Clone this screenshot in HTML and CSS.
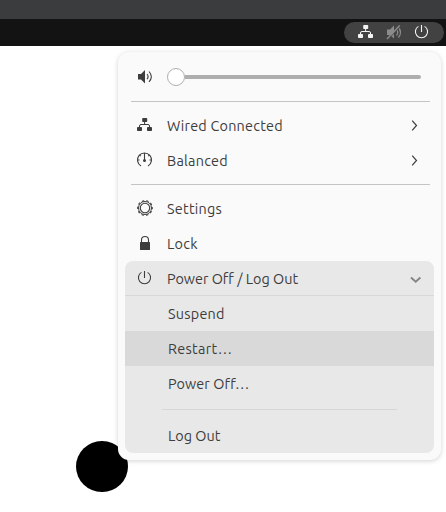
FILE: index.html
```
<!DOCTYPE html>
<html lang="en">
<head>
<meta charset="utf-8">
<title>System menu</title>
<link rel="stylesheet" href="styles.css">
</head>
<body>
<svg class="defs" width="0" height="0">
  <symbol id="network" viewBox="0 0 16 16">
    <g fill="currentColor"><rect x="5.2" y="0" width="5" height="4" rx=".8"/><rect x="0" y="9" width="5" height="4" rx=".8"/><rect x="10" y="9" width="5" height="4" rx=".8"/></g>
    <path d="M7.6 3v3.5M2.5 10V8q0-1.5 1.5-1.5h7q1.5 0 1.5 1.5v2" fill="none" stroke="currentColor"/>
  </symbol>
  <symbol id="power" viewBox="0 0 16 16">
    <path d="M7.5 0v7M4.4 1.4a6.1 6.1 0 1 0 6.2 0" fill="none" stroke="currentColor" stroke-width="1.1"/>
  </symbol>
  <symbol id="chevron" viewBox="0 0 16 16">
    <path d="M4.2 2.7l4.3 4.8-4.3 4.8" fill="none" stroke="currentColor" stroke-width="1.2"/>
  </symbol>
</svg>
<header class="window-bar"></header>
<div class="top-bar">
  <div class="tray">
    <svg class="icon"><use href="#network"/></svg>
    <svg class="icon muted" viewBox="0 0 16 16"><path d="M1 4.5h3l4-4v13l-4-3.5H1z" fill="currentColor"/><path d="M10.5 4.5q2.5 3 0 6M12.5 2.5q4 5 0 10" fill="none" stroke="currentColor" stroke-width="1.3"/><path d="M1.5 15L14.5 1.5" stroke="#424242" stroke-width="1"/><path d="M1 14L13.7.5" stroke="currentColor" stroke-width="1.5"/></svg>
    <svg class="icon"><use href="#power"/></svg>
  </div>
</div>
<main class="desktop"><div class="dot"></div></main>
<div class="menu">
  <div class="row volume">
    <svg class="icon" viewBox="0 0 16 16"><path d="M1 5h3L8 1v13.4L4 10.5H1z" fill="currentColor"/><path d="M10 5q2.2 2.6 0 5.2M12 2.5q4.6 5.2 0 10.4" fill="none" stroke="currentColor" stroke-width="1.1"/></svg>
    <div class="slider"><span class="knob"></span><span class="track"></span></div>
  </div>
  <hr class="line">
  <div class="row"><svg class="icon"><use href="#network"/></svg><span class="label wired">Wired Connected</span><svg class="icon arrow"><use href="#chevron"/></svg></div>
  <div class="row"><svg class="icon" viewBox="0 0 16 16"><path d="M4 13A7 7 0 1 1 11 13" fill="none" stroke="currentColor" stroke-width="1.1"/><path d="M7.5 0v7M.5 7h2M12.5 7h2M2.5 2l1.2 1.2M12.5 2l-1.2 1.2" stroke="currentColor" stroke-width="1.1"/><circle cx="7.5" cy="7.5" r="1.5" fill="currentColor"/></svg><span class="label balanced">Balanced</span><svg class="icon arrow"><use href="#chevron"/></svg></div>
  <hr class="line">
  <div class="row"><svg class="icon" viewBox="0 0 16 16"><g fill="none" stroke="currentColor"><circle cx="8" cy="7" r="7.3" stroke-width="1.1" stroke-dasharray="2.4 2.187" stroke-dashoffset="1.2"/><circle cx="8" cy="7" r="6.5" stroke-width="1"/><circle cx="8" cy="7" r="4.7" stroke-width="1.1"/></g></svg><span class="label settings">Settings</span></div>
  <div class="row"><svg class="icon" viewBox="0 0 16 16"><rect x="3" y="6" width="10" height="8" rx=".5" fill="currentColor"/><path d="M4.5 7V4a3.5 3.5 0 0 1 7 0V7" fill="none" stroke="currentColor" stroke-width="1.1"/></svg><span class="label lock">Lock</span></div>
  <section class="submenu">
    <div class="row head"><svg class="icon"><use href="#power"/></svg><span class="label session">Power Off / Log Out</span><svg class="icon arrow down" viewBox="0 0 16 16"><path d="M3 6.5l4.7 4.2 4.7-4.2" fill="none" stroke="currentColor" stroke-width="1.9"/></svg></div>
    <div class="item"><span class="suspend">Suspend</span></div>
    <div class="item active"><span class="restart">Restart…</span></div>
    <div class="item"><span class="poweroff">Power Off…</span></div>
    <hr class="subline">
    <div class="item"><span class="logout">Log Out</span></div>
  </section>
</div>
</body>
</html>
```
FILE: styles.css
```
* { box-sizing: border-box; }
body {
  margin: 0;
  height: 512px;
  overflow: hidden;
  display: flex;
  flex-direction: column;
  background: #fff;
  color: #3d3d3d;
  font: 14.4px/20px Ubuntu, "Noto Sans", sans-serif;
}
.defs { position: absolute; }
.window-bar { height: 19px; background: #3b3c3e; }
.top-bar {
  height: 27px;
  padding: 3px 2px 0 0;
  display: flex;
  justify-content: flex-end;
  background: #131313;
}
.tray {
  width: 100px;
  height: 21px;
  padding: 0 14px;
  display: flex;
  align-items: center;
  justify-content: space-between;
  border-radius: 11px;
  background: #424242;
  color: #f4f4f4;
}
.icon { width: 16px; height: 16px; flex: none; display: block; overflow: visible; }
.muted { color: #8b8b8b; }
.desktop { flex: 1; padding: 394.5px 0 0 76px; }
.dot { width: 52px; height: 51.5px; border-radius: 50%; background: #000; }
.menu {
  position: absolute;
  left: 118px;
  top: 52px;
  width: 323px;
  height: 408px;
  padding: 8px 7px 0;
  border-radius: 11px;
  background: #fafafa;
  box-shadow: 0 1px 5px rgba(0, 0, 0, .18);
}
.row {
  height: 35px;
  padding: 0 10px 0 12px;
  display: flex;
  align-items: center;
}
.volume { height: 34px; margin-bottom: 7px; }
.label { margin-left: 14px; white-space: nowrap; }
.arrow { margin-left: auto; }
.wired { letter-spacing: .22px; }
.balanced, .settings, .lock, .suspend { letter-spacing: .25px; }
.restart { letter-spacing: .32px; }
.poweroff { letter-spacing: .1px; }
.slider { flex: 1; margin-left: 14px; display: flex; align-items: center; }
.knob {
  width: 18px;
  height: 18px;
  border: 1px solid #b0b0b0;
  border-radius: 50%;
  background: #fff;
}
.track { flex: 1; height: 4px; margin-right: 3px; border-radius: 0 2px 2px 0; background: #aeaeae; }
.line { height: 1px; margin: 6px 4px 6px 6px; border: 0; background: #c4c4c4; }
.submenu { height: 192px; border-radius: 8px; background: #e8e8e8; overflow: hidden; }
.head { padding-top: 1px; border-bottom: 1px solid #d8d8d8; }
.down { color: #858585; }
.item { height: 35px; padding-left: 43px; display: flex; align-items: center; }
.active { background: #d9d9d9; }
.subline { height: 1px; margin: 8px 37px; border: 0; background: #d6d6d6; }
```
